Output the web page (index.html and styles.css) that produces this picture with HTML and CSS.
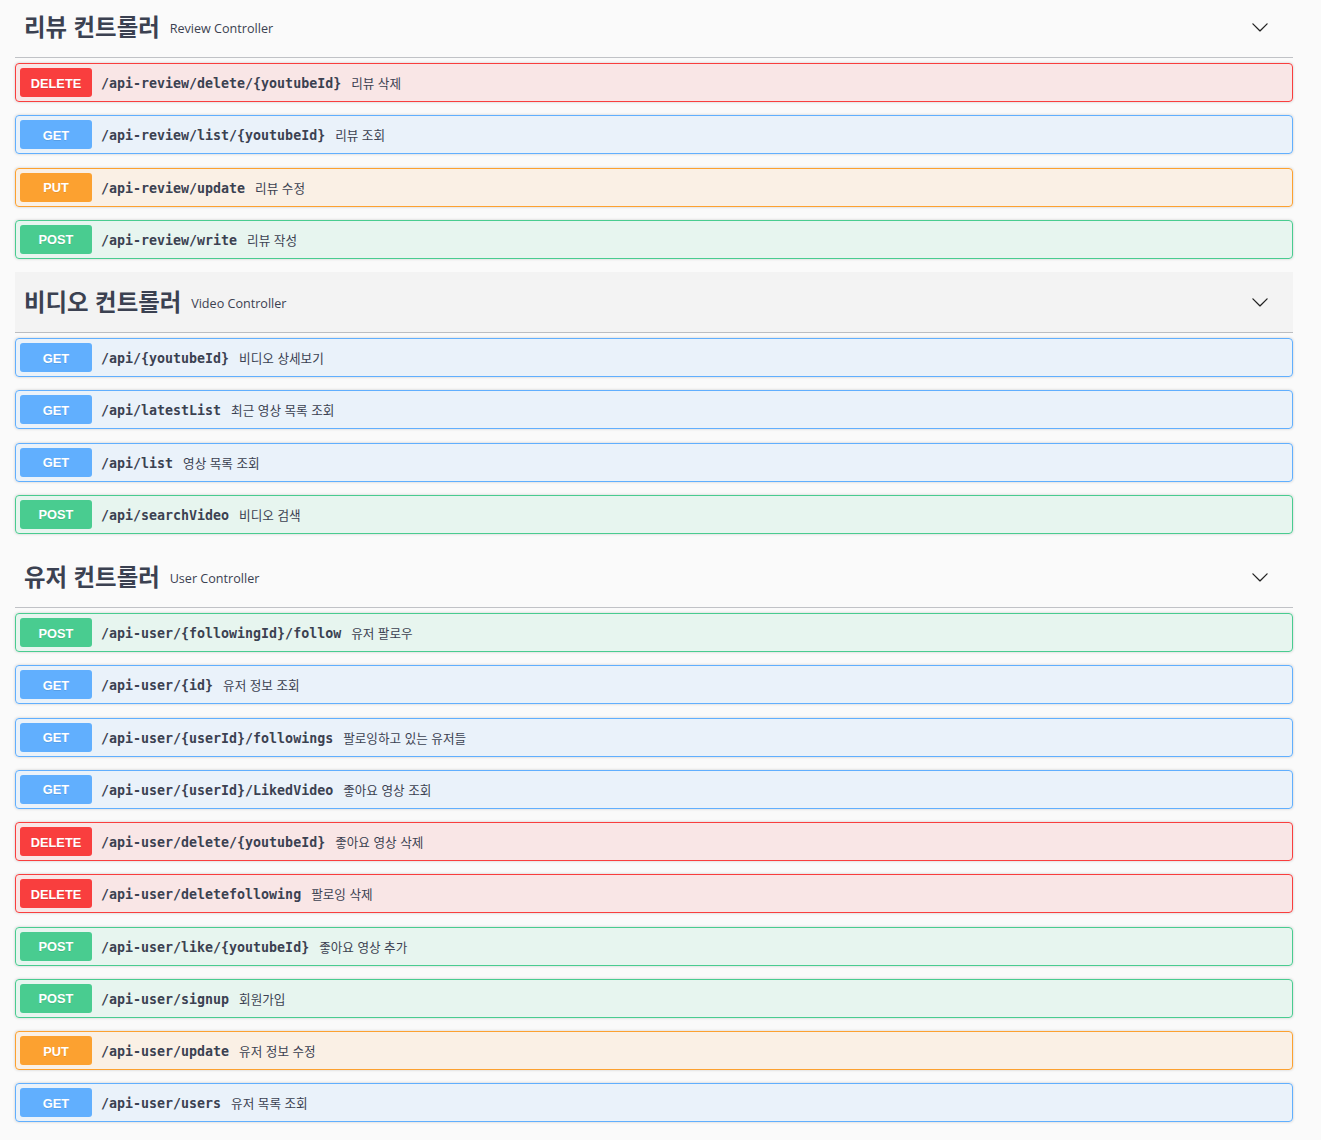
FILE: index.html
```html
<!DOCTYPE html>
<html lang="ko">
<head>
<meta charset="utf-8">
<title>Swagger UI</title>
<link rel="stylesheet" href="styles.css">
</head>
<body>
<div class="wrapper">

  <section class="tag-section">
    <div class="tag-header">
      <h3 class="tag-title">리뷰 컨트롤러</h3>
      <small class="tag-desc">Review Controller</small>
      <svg class="chevron" viewBox="0 0 20 20" width="18" height="18"><path d="M17.418 6.109c.272-.268.709-.268.979 0s.271.701 0 .969l-7.908 7.83c-.27.268-.707.268-.979 0l-7.908-7.83c-.27-.268-.27-.701 0-.969.271-.268.709-.268.979 0L10 13.25l7.418-7.141z"/></svg>
    </div>
    <div class="op op-delete"><span class="method">DELETE</span><span class="summary"><span class="path">/api-review/delete/{youtubeId}</span><span class="desc">리뷰 삭제</span></span></div>
    <div class="op op-get"><span class="method">GET</span><span class="summary"><span class="path">/api-review/list/{youtubeId}</span><span class="desc">리뷰 조회</span></span></div>
    <div class="op op-put"><span class="method">PUT</span><span class="summary"><span class="path">/api-review/update</span><span class="desc">리뷰 수정</span></span></div>
    <div class="op op-post"><span class="method">POST</span><span class="summary"><span class="path">/api-review/write</span><span class="desc">리뷰 작성</span></span></div>
  </section>

  <section class="tag-section">
    <div class="tag-header is-hover">
      <h3 class="tag-title">비디오 컨트롤러</h3>
      <small class="tag-desc">Video Controller</small>
      <svg class="chevron" viewBox="0 0 20 20" width="18" height="18"><path d="M17.418 6.109c.272-.268.709-.268.979 0s.271.701 0 .969l-7.908 7.83c-.27.268-.707.268-.979 0l-7.908-7.83c-.27-.268-.27-.701 0-.969.271-.268.709-.268.979 0L10 13.25l7.418-7.141z"/></svg>
    </div>
    <div class="op op-get"><span class="method">GET</span><span class="summary"><span class="path">/api/{youtubeId}</span><span class="desc">비디오 상세보기</span></span></div>
    <div class="op op-get"><span class="method">GET</span><span class="summary"><span class="path">/api/latestList</span><span class="desc">최근 영상 목록 조회</span></span></div>
    <div class="op op-get"><span class="method">GET</span><span class="summary"><span class="path">/api/list</span><span class="desc">영상 목록 조회</span></span></div>
    <div class="op op-post"><span class="method">POST</span><span class="summary"><span class="path">/api/searchVideo</span><span class="desc">비디오 검색</span></span></div>
  </section>

  <section class="tag-section">
    <div class="tag-header">
      <h3 class="tag-title">유저 컨트롤러</h3>
      <small class="tag-desc">User Controller</small>
      <svg class="chevron" viewBox="0 0 20 20" width="18" height="18"><path d="M17.418 6.109c.272-.268.709-.268.979 0s.271.701 0 .969l-7.908 7.83c-.27.268-.707.268-.979 0l-7.908-7.83c-.27-.268-.27-.701 0-.969.271-.268.709-.268.979 0L10 13.25l7.418-7.141z"/></svg>
    </div>
    <div class="op op-post"><span class="method">POST</span><span class="summary"><span class="path">/api-user/{followingId}/follow</span><span class="desc">유저 팔로우</span></span></div>
    <div class="op op-get"><span class="method">GET</span><span class="summary"><span class="path">/api-user/{id}</span><span class="desc">유저 정보 조회</span></span></div>
    <div class="op op-get"><span class="method">GET</span><span class="summary"><span class="path">/api-user/{userId}/followings</span><span class="desc">팔로잉하고 있는 유저들</span></span></div>
    <div class="op op-get"><span class="method">GET</span><span class="summary"><span class="path">/api-user/{userId}/LikedVideo</span><span class="desc">좋아요 영상 조회</span></span></div>
    <div class="op op-delete"><span class="method">DELETE</span><span class="summary"><span class="path">/api-user/delete/{youtubeId}</span><span class="desc">좋아요 영상 삭제</span></span></div>
    <div class="op op-delete"><span class="method">DELETE</span><span class="summary"><span class="path">/api-user/deletefollowing</span><span class="desc">팔로잉 삭제</span></span></div>
    <div class="op op-post"><span class="method">POST</span><span class="summary"><span class="path">/api-user/like/{youtubeId}</span><span class="desc">좋아요 영상 추가</span></span></div>
    <div class="op op-post"><span class="method">POST</span><span class="summary"><span class="path">/api-user/signup</span><span class="desc">회원가입</span></span></div>
    <div class="op op-put"><span class="method">PUT</span><span class="summary"><span class="path">/api-user/update</span><span class="desc">유저 정보 수정</span></span></div>
    <div class="op op-get"><span class="method">GET</span><span class="summary"><span class="path">/api-user/users</span><span class="desc">유저 목록 조회</span></span></div>
  </section>

</div>
</body>
</html>
```

FILE: styles.css
```css
html, body {
  margin: 0;
  padding: 0;
  background: #fafafa;
  color: #3b4151;
  font-family: "Noto Sans", "Noto Sans CJK KR", sans-serif;
}

.wrapper {
  margin-top: -3px;
  padding: 0 28px 0 15px;
}

.tag-header {
  display: flex;
  align-items: center;
  height: 60px;
  padding: 0 24px 0 9px;
  border-bottom: 1px solid rgba(59, 65, 81, 0.3);
  margin-bottom: 5px;
  box-sizing: content-box;
}

.tag-header.is-hover {
  background: #f3f3f3;
}

.tag-title {
  margin: 0;
  font-family: "Noto Sans CJK KR", sans-serif;
  font-size: 23.4px;
  font-weight: 700;
  color: #3b4151;
  line-height: 1;
}

.tag-desc {
  margin-left: 10px;
  font-family: "Open Sans", "Noto Sans CJK KR", sans-serif;
  font-size: 12.6px;
  color: #3b4151;
  padding-top: 2px;
}

.chevron {
  margin-left: auto;
  fill: #222;
}

.op {
  display: flex;
  align-items: center;
  height: 39px;
  box-sizing: border-box;
  padding: 0 4px;
  border: 1px solid;
  border-radius: 4px;
  margin-bottom: 13.25px;
  box-shadow: 0 0 3px rgba(0, 0, 0, 0.19);
}

.method {
  flex: 0 0 auto;
  width: 72px;
  height: 29px;
  display: flex;
  align-items: center;
  justify-content: center;
  border-radius: 3px;
  color: #fff;
  font-family: "Liberation Sans", Arial, sans-serif;
  font-weight: 700;
  font-size: 12.8px;
  text-shadow: 0 1px 0 rgba(0, 0, 0, 0.1);
  padding-top: 1px;
  box-sizing: border-box;
}

.summary {
  display: flex;
  align-items: baseline;
}

.path {
  padding: 0 9px;
  font-family: "DejaVu Sans Mono", "Liberation Mono", monospace;
  font-weight: 600;
  font-size: 13.3px;
  color: #3b4151;
}

.desc {
  padding-left: 1px;
  font-family: "Noto Sans CJK KR", sans-serif;
  font-size: 12.6px;
  color: #3b4151;
}

.op-delete { background: rgba(249, 62, 62, 0.1); border-color: #f93e3e; }
.op-delete .method { background: #f93e3e; }

.op-get { background: rgba(97, 175, 254, 0.1); border-color: #61affe; }
.op-get .method { background: #61affe; }

.op-put { background: rgba(252, 161, 48, 0.1); border-color: #fca130; }
.op-put .method { background: #fca130; }

.op-post { background: rgba(73, 204, 144, 0.1); border-color: #49cc90; }
.op-post .method { background: #49cc90; }
```
